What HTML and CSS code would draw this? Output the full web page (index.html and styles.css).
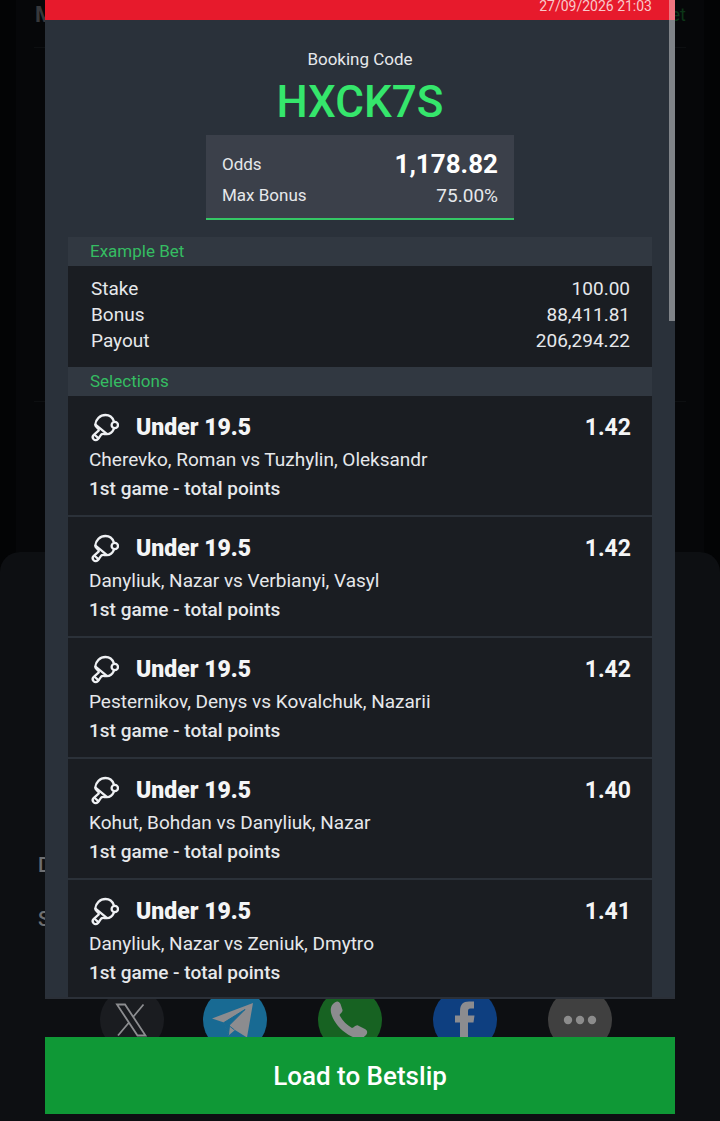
FILE: index.html
```
<!DOCTYPE html>
<html lang="en">
<head>
<meta charset="utf-8">
<meta name="viewport" content="width=device-width, initial-scale=1">
<title>Booking Code</title>
<link rel="stylesheet" href="styles.css">
</head>
<body>
<svg class="defs" aria-hidden="true">
  <symbol id="paddle" viewBox="-1 1 30 30">
    <g fill="none" stroke="#eef0f3" stroke-width="2.3" stroke-linejoin="round" stroke-linecap="round">
      <path d="M23.800 9.200C22.500 5.500 19.500 3 15.500 3C10 3 5.600 7.200 5.200 12.800C5.200 15 9.400 16.500 8.800 18.400L3.800 22.800C2.400 24.200 2.400 26 3.600 27.200C5 28.600 7 28.400 8.200 26.800L11 22.800C12.500 21 14 22.400 16.800 22.200C20 22 22.500 20 23.800 17"/>
      <path d="M5.800 12.800L16.500 21.600M4.800 23L8.400 26.200"/>
      <circle cx="24.800" cy="13" r="3.200"/>
    </g>
  </symbol>
</svg>

<div class="backdrop" aria-hidden="true">
  <div class="page-card">
    <div class="page-head"><span class="page-title">M</span><span class="page-link">et</span></div>
    <div class="page-line"></div>
    <div class="page-line"></div>
  </div>
  <div class="sheet">
    <div class="sheet-labels"><span>D</span><span>S</span></div>
    <div class="share">
      <svg viewBox="0 0 64 64"><circle cx="32" cy="32" r="32" fill="#1a1c20"/><path d="M17 16.500H25L45.500 47.500H37.500ZM43.500 16.500L33.500 28.500M29 34.500L18 47.500" fill="none" stroke="#8c8d90" stroke-width="1.800"/></svg>
      <svg viewBox="0 0 64 64"><circle cx="32" cy="32" r="32" fill="#186a93"/><path d="M9 30.500L50 15L44 49.500L32 42L25.500 47.500L21 34.500Z" fill="#8c8c8f"/><path d="M21 34.500L42 21.500L26.500 37L25.500 47L21 34.500M26.500 38L31.500 42" fill="#186a93" stroke="#186a93" stroke-width="1"/></svg>
      <svg viewBox="0 0 64 64"><circle cx="32" cy="32" r="32" fill="#176222"/><path d="M15 16C18 12.500 21 12.500 22.500 16L24.500 22C25 24 22 25.500 21.500 27C24 32 28.500 37 34 40C36 40 37.500 36.500 40 37.500L47 41C51 43.500 49 47 45 49.500C39 53 27 46 20 38C14 30.500 10 21.500 15 16Z" fill="#8c8c8f"/></svg>
      <svg viewBox="0 0 64 64"><circle cx="32" cy="32" r="32" fill="#0e3f80"/><path d="M27 64V34.500H22V27.500H27V23C27 16.500 30 13.500 36 13.500H41V20.500H37.500C35.500 20.500 35 21.500 35 23.500V27.500H41.500L40.500 34.500H35V64Z" fill="#8c8c8f"/></svg>
      <svg viewBox="0 0 64 64"><circle cx="32" cy="32" r="32" fill="#404040"/><g fill="#8c8c8c"><circle cx="20" cy="32" r="4.200"/><circle cx="32" cy="32" r="4.200"/><circle cx="44" cy="32" r="4.200"/></g></svg>
    </div>
  </div>
</div>

<main class="modal">
  <section class="ticket">
    <header class="topbar"><time>27/09/2026 21:03</time></header>
    <div class="booking">
      <p class="booking-label">Booking Code</p>
      <h1 class="booking-code">HXCK7S</h1>
      <dl class="odds">
        <div><dt>Odds</dt><dd class="total">1,178.82</dd></div>
        <div><dt>Max Bonus</dt><dd>75.00%</dd></div>
      </dl>
    </div>
    <div class="panel">
      <h2>Example Bet</h2>
      <dl class="example">
        <div><dt>Stake</dt><dd>100.00</dd></div>
        <div><dt>Bonus</dt><dd>88,411.81</dd></div>
        <div><dt>Payout</dt><dd>206,294.22</dd></div>
      </dl>
      <h2>Selections</h2>
      <ul class="selections">
        <li>
          <div class="pick"><svg class="sport"><use href="#paddle"/></svg><strong>Under 19.5</strong><span class="price">1.42</span></div>
          <p class="teams">Cherevko, Roman vs Tuzhylin, Oleksandr</p>
          <p class="market">1st game - total points</p>
        </li>
        <li>
          <div class="pick"><svg class="sport"><use href="#paddle"/></svg><strong>Under 19.5</strong><span class="price">1.42</span></div>
          <p class="teams">Danyliuk, Nazar vs Verbianyi, Vasyl</p>
          <p class="market">1st game - total points</p>
        </li>
        <li>
          <div class="pick"><svg class="sport"><use href="#paddle"/></svg><strong>Under 19.5</strong><span class="price">1.42</span></div>
          <p class="teams">Pesternikov, Denys vs Kovalchuk, Nazarii</p>
          <p class="market">1st game - total points</p>
        </li>
        <li>
          <div class="pick"><svg class="sport"><use href="#paddle"/></svg><strong>Under 19.5</strong><span class="price">1.40</span></div>
          <p class="teams">Kohut, Bohdan vs Danyliuk, Nazar</p>
          <p class="market">1st game - total points</p>
        </li>
        <li>
          <div class="pick"><svg class="sport"><use href="#paddle"/></svg><strong>Under 19.5</strong><span class="price">1.41</span></div>
          <p class="teams">Danyliuk, Nazar vs Zeniuk, Dmytro</p>
          <p class="market">1st game - total points</p>
        </li>
      </ul>
    </div>
    <div class="scroll-thumb"></div>
  </section>
  <button class="load" type="button">Load to Betslip</button>
</main>
</body>
</html>
```
FILE: styles.css
```
* { box-sizing: border-box; }

body, h1, h2, p, dl, dd, ul { margin: 0; padding: 0; }

body {
  position: relative;
  height: 100vh;
  overflow: hidden;
  background: #030405;
  color: #e6e8eb;
  font-family: Roboto, "Liberation Sans", sans-serif;
}

.defs { position: absolute; width: 0; height: 0; }

/* Dimmed page and share sheet behind the dialog */
.backdrop {
  position: absolute;
  inset: 0;
  display: flex;
  flex-direction: column;
  justify-content: flex-end;
}

.page-card {
  flex: 1;
  margin: 0 16px;
  background: #060709;
}

.page-head {
  display: flex;
  justify-content: space-between;
  align-items: center;
  height: 28px;
  padding: 0 18px 0 19px;
}

.page-title { color: #37383b; font-size: 22px; font-weight: 700; }
.page-link { color: #0c3517; font-size: 18px; }

.page-line {
  height: 20px;
  margin: 0 18px;
  border-bottom: 1px solid #0d0f11;
}

.page-line + .page-line { height: 354px; }

.sheet {
  display: flex;
  flex-direction: column;
  justify-content: space-between;
  height: 569px;
  padding: 300px 108px 69px 100px;
  border-radius: 20px 20px 0 0;
  background: #0d0f12;
}

.sheet-labels {
  display: grid;
  gap: 28px;
  margin-left: -62px;
  color: #6d6f72;
  font-size: 20px;
  font-weight: 500;
  line-height: 26px;
}

.share {
  display: grid;
  grid-template-columns: 103fr 115fr 115fr 115fr 64px;
}

.share svg { width: 64px; height: 64px; }

/* Dialog */
.modal {
  position: relative;
  display: flex;
  flex-direction: column;
  gap: 38px;
  height: 100%;
  padding: 0 45px 7px;
}

.ticket {
  position: relative;
  flex: 1;
  min-height: 0;
  overflow: hidden;
  border-bottom: 2px solid #2b3038;
  background: #2a313a;
}

.topbar {
  display: flex;
  justify-content: flex-end;
  padding: 0 23px 8px;
  background: #e71a2c;
  color: #f9c9cb;
  font-size: 14px;
  line-height: 12px;
}

.booking {
  display: flex;
  flex-direction: column;
  align-items: center;
  padding: 28px 23px 17px;
}

.booking-label { font-size: 17px; line-height: 22px; }

.booking-code {
  color: #35e66c;
  font-size: 44px;
  font-weight: 500;
  line-height: 65px;
}

dl div { display: flex; justify-content: space-between; align-items: center; }

.odds {
  width: 308px;
  padding: 14px 16px 7px;
  border-bottom: 2px solid #35c765;
  background: #3b404a;
  font-size: 17px;
  line-height: 31px;
}

.odds dd { font-size: 19px; }
.odds .total { color: #fff; font-size: 26px; font-weight: 700; }

.panel { margin: 0 23px; background: #1a1d22; }

h2 {
  padding: 0 22px;
  background: #313841;
  color: #35bd62;
  font-size: 17px;
  font-weight: 400;
  line-height: 29px;
}

.example {
  padding: 10px 22px 13px 23px;
  font-size: 19px;
  line-height: 26px;
}

.selections { list-style: none; }

.selections li {
  height: 121px;
  padding: 16px 21px 10px;
  border-bottom: 2px solid #2b3139;
}

.pick {
  display: flex;
  align-items: center;
  color: #f4f5f6;
  font-size: 23px;
  font-weight: 700;
  line-height: 32px;
}

.sport { width: 30px; height: 30px; margin-right: 17px; }
.price { margin-left: auto; }
.teams, .market { font-size: 19px; line-height: 29px; }
.teams { padding-top: 1px; }
.market { font-weight: 500; }

.scroll-thumb {
  position: absolute;
  top: 0;
  right: 0;
  width: 6px;
  height: 321px;
  background: rgba(255, 255, 255, 0.4);
}

.load {
  width: 100%;
  height: 77px;
  border: 0;
  background: #0f9836;
  color: #fff;
  font-family: inherit;
  font-size: 26px;
  font-weight: 500;
}
```
